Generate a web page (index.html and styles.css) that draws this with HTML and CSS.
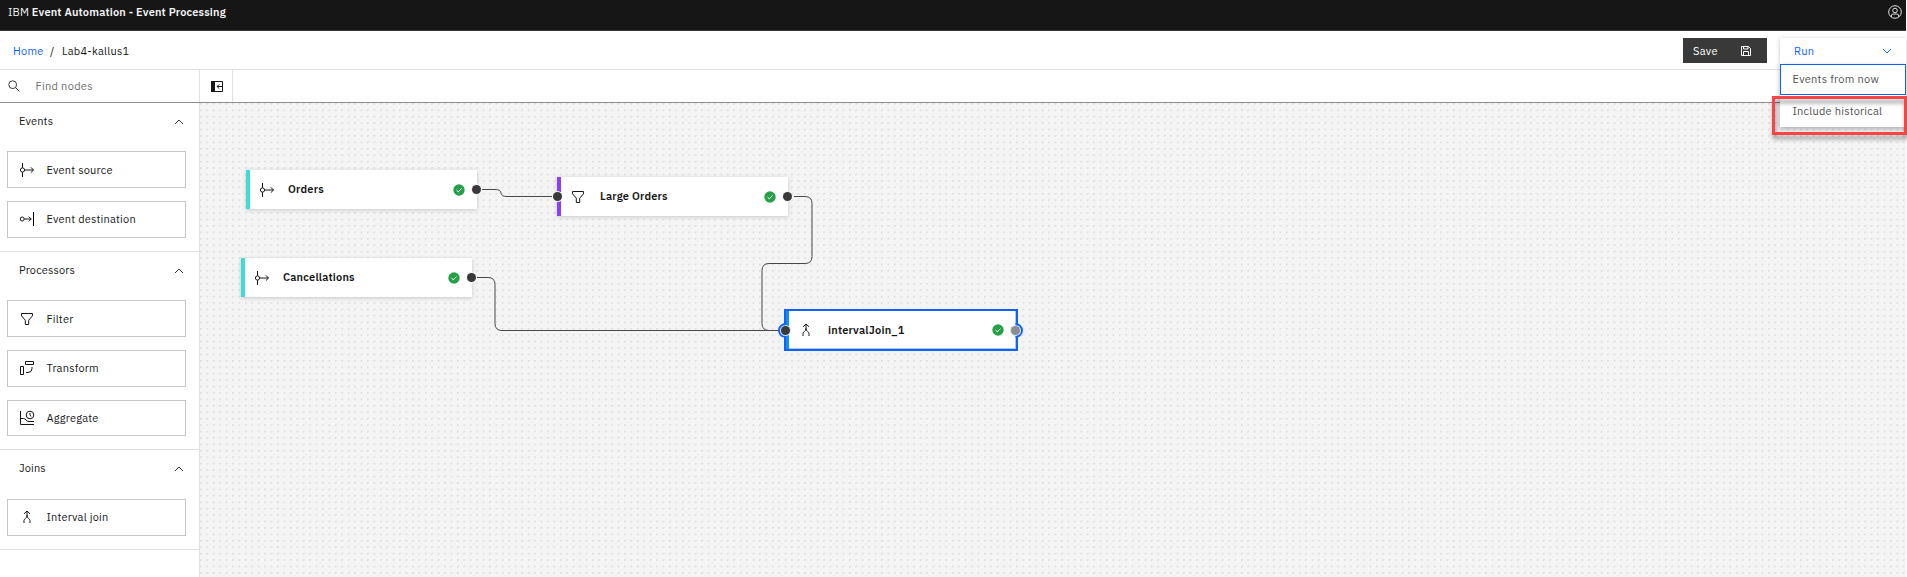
FILE: index.html
```html
<!DOCTYPE html>
<html lang="en">
<head>
<meta charset="utf-8">
<title>Event Processing</title>
<link rel="stylesheet" href="styles.css">
</head>
<body>
<svg class="defs" aria-hidden="true">
  <symbol id="source" viewBox="0 0 16 16"><path d="M3.500 1v4.800M3.500 10.200V15M5.700 8h8.800M11.800 5.300 14.500 8l-2.700 2.700"/><circle cx="3.500" cy="8" r="2.100"/></symbol>
  <symbol id="destination" viewBox="0 0 16 16"><path d="M5.400 8h6.800M9.800 5.600 12.200 8l-2.400 2.400"/><circle cx="3.200" cy="8" r="2"/><path class="heavy" d="M14.500 1v14"/></symbol>
  <symbol id="filter" viewBox="0 0 16 16"><path d="M2.500 2.500h11v2.300L9.700 9.200v4.300H6.300V9.200L2.500 4.800z"/></symbol>
  <symbol id="transform" viewBox="0 0 16 16"><path d="M6.500 1.500h8v3h-8zM1.500 6.500h3v8h-3zM13 7v1.500a4 4 0 0 1-4 4H7"/></symbol>
  <symbol id="aggregate" viewBox="0 0 16 16"><path d="M1.500 1v13.500H15M1.500 8.500h3c2.500 0 2.500 3 5.500 3H15"/><circle cx="11" cy="5" r="3.800"/><path d="M11 3v2.300l1.300 1"/></symbol>
  <symbol id="join" viewBox="0 0 16 16"><path d="M8 2v5M5 4.800 8 2l3 2.800M8 6.500c0 3-3 3-3 5V14M8 6.500c0 3 3 3 3 5V14"/></symbol>
  <symbol id="chevron" viewBox="0 0 10 6"><path d="m1 5 4-4 4 4"/></symbol>
  <symbol id="check" viewBox="0 0 12 12"><circle cx="6" cy="6" r="5.700" fill="#24a148" stroke="none"/><path stroke="#fff" d="m3.500 6.100 1.800 1.700 3.200-3.300"/></symbol>
</svg>

<header class="header">
  <div class="brand">IBM <b>Event Automation - Event Processing</b></div>
  <svg class="user" viewBox="0 0 14 14"><circle cx="7" cy="7" r="6.300"/><circle cx="7" cy="5.500" r="2.300"/><path d="M3.300 12V11a2 2 0 0 1 2-2h3.400a2 2 0 0 1 2 2v1"/></svg>
</header>

<div class="toolbar">
  <nav class="crumbs"><a class="home">Home</a><span class="slash">/</span><span>Lab4-kallus1</span></nav>
  <div class="actions">
    <button class="save"><span>Save</span><svg class="disk" viewBox="0 0 12 12"><path d="M1.500 1.500h7l2 2v7h-9zM3.500 1.500v2.500h4.500V1.500M3.500 10.500v-4h5v4"/></svg></button>
    <div class="run"><span>Run</span><svg class="down" viewBox="0 0 10 6"><path d="m1 1 4 4 4-4"/></svg>
      <div class="menu">
        <div class="option focused">Events from now</div>
        <div class="option historical">Include historical</div>
      </div>
      <div class="highlight"></div>
    </div>
  </div>
</div>

<div class="subbar">
  <div class="search"><svg class="glass" viewBox="0 0 12 12"><circle cx="4.700" cy="4.700" r="3.900"/><path d="m7.600 7.600 3.800 3.800"/></svg><span>Find nodes</span></div>
  <div class="toggle"><svg class="panel" viewBox="0 0 12 11"><path d="M.5.5h11v10H.500z"/><path class="solid" d="M0 0h4v11H0z"/><path d="M11.500 5.500H6.300M8.300 3.300 6.100 5.500l2.200 2.200"/></svg></div>
</div>

<main class="main">
  <aside class="sidebar">
    <section class="group">
      <h2 class="group-head"><span>Events</span><svg class="caret"><use href="#chevron"/></svg></h2>
      <div class="item"><svg class="icon"><use href="#source"/></svg><span>Event source</span></div>
      <div class="item"><svg class="icon"><use href="#destination"/></svg><span>Event destination</span></div>
    </section>
    <section class="group">
      <h2 class="group-head"><span>Processors</span><svg class="caret"><use href="#chevron"/></svg></h2>
      <div class="item"><svg class="icon"><use href="#filter"/></svg><span>Filter</span></div>
      <div class="item"><svg class="icon"><use href="#transform"/></svg><span>Transform</span></div>
      <div class="item short"><svg class="icon"><use href="#aggregate"/></svg><span>Aggregate</span></div>
    </section>
    <section class="group joins">
      <h2 class="group-head"><span>Joins</span><svg class="caret"><use href="#chevron"/></svg></h2>
      <div class="item"><svg class="icon"><use href="#join"/></svg><span>Interval join</span></div>
    </section>
  </aside>

  <div class="canvas">
    <svg class="dots"><defs><pattern id="grid" width="6.426" height="6.426" patternUnits="userSpaceOnUse" x="0" y="0"><path d="M.2.2h1.900L.2 2.100z"/></pattern></defs><rect width="100%" height="100%" fill="url(#grid)"/></svg>
    <svg class="wires" viewBox="200 103 1706 474">
      <path d="M482 189.500h13q6 0 6 3.500t6 3.500h46"/>
      <path d="M794 196.500h11q7 0 7 7v53q0 7-7 7h-36q-7 0-7 7v53q0 7 7 7h14"/>
      <path d="M477 277.500h11q7 0 7 7v39q0 7 7 7h284"/>
    </svg>
    <div class="node orders"><svg class="icon"><use href="#source"/></svg><span class="label">Orders</span><svg class="ok"><use href="#check"/></svg><i class="port out"></i></div>
    <div class="node large"><i class="port in"></i><svg class="icon"><use href="#filter"/></svg><span class="label">Large Orders</span><svg class="ok"><use href="#check"/></svg><i class="port out"></i></div>
    <div class="node cancel"><svg class="icon"><use href="#source"/></svg><span class="label">Cancellations</span><svg class="ok"><use href="#check"/></svg><i class="port out"></i></div>
    <div class="node join"><i class="port in"></i><svg class="icon"><use href="#join"/></svg><span class="label">intervalJoin_1</span><svg class="ok"><use href="#check"/></svg><i class="port out"></i></div>
  </div>
</main>
</body>
</html>
```
FILE: styles.css
```css
* { box-sizing: border-box; }
body { margin: 0; width: 1907px; height: 577px; padding-right: 1px; overflow: hidden; display: flex; flex-direction: column; background: #fff; color: #161616; font: 11px/16px "IBM Plex Sans", Roboto, "Liberation Sans", sans-serif; white-space: nowrap; }
svg { display: block; fill: none; stroke: currentColor; flex: none; }
.defs { position: absolute; width: 0; height: 0; }
.header { height: 31px; flex: none; display: flex; justify-content: space-between; background: #161616; border-bottom: 1px solid #393939; color: #f4f4f4; padding: 4px 4px 0 8px; }
.brand { letter-spacing: .17px; }
.brand b { font-weight: 600; }
.user { width: 14px; height: 14px; margin-top: 1px; color: #e0e0e0; }
.toolbar { height: 39px; flex: none; display: flex; justify-content: space-between; align-items: flex-start; border-bottom: 1px solid #e0e0e0; padding-top: 7px; }
.crumbs { display: flex; padding: 5px 0 0 13px; letter-spacing: .24px; }
.home { color: #0f62fe; width: 37px; }
.slash { width: 12px; }
.actions { display: flex; gap: 13px; }
.save { width: 84px; height: 25px; display: flex; align-items: center; justify-content: space-between; padding: 0 15px 0 10px; border: 0; background: #393939; color: #fff; font: inherit; letter-spacing: .3px; }
.disk { width: 12px; height: 12px; }
.run { position: relative; z-index: 2; width: 126px; height: 26px; display: flex; align-items: center; justify-content: space-between; padding: 0 14px 0 14px; background: #fff; color: #0f62fe; box-shadow: 0 1px 4px rgba(0,0,0,.25); letter-spacing: .2px; }
.down { width: 10px; height: 6px; }
.menu { position: absolute; left: 0; top: 26px; width: 126px; height: 63px; background: #fff; box-shadow: 0 2px 5px rgba(0,0,0,.3); color: #525252; }
.option { height: 31px; display: flex; align-items: center; padding: 0 11.500px 1px; border: 1px solid transparent; letter-spacing: .27px; }
.focused { border-color: #0f62fe; }
.historical { padding-bottom: 0; letter-spacing: .22px; }
.highlight { position: absolute; left: -8px; top: 58px; width: 135px; height: 39px; border: 3px solid #fa4444; filter: drop-shadow(1px 4px 2px rgba(0,0,0,.4)); }
.subbar { height: 33px; flex: none; display: flex; border-bottom: 1px solid #8d8d8d; }
.search { width: 200px; display: flex; align-items: center; gap: 15.500px; padding-left: 8px; border-right: 1px solid #e0e0e0; color: #6f6f6f; letter-spacing: .3px; }
.glass { width: 12px; height: 12px; color: #393939; }
.toggle { width: 33px; display: flex; align-items: center; padding-left: 10.500px; border-right: 1px solid #e0e0e0; }
.panel { width: 12px; height: 11px; }
.solid { fill: currentColor; stroke: none; }
.heavy { stroke: #000; }
.main { flex: 1; min-height: 0; display: flex; }
.sidebar { width: 200px; flex: none; border-right: 1px solid #e0e0e0; }
.group { border-bottom: 1px solid #e0e0e0; padding: 0 13px 13px 7px; }
.group-head { height: 48px; margin: 0; display: flex; align-items: flex-start; justify-content: space-between; padding: 10px 2px 0 12px; font: inherit; letter-spacing: .15px; }
.joins .group-head { height: 49px; }
.caret { width: 10px; height: 6px; margin-top: 6px; color: #393939; }
.item { height: 37px; display: flex; align-items: center; gap: 11.400px; padding-left: 11px; border: 1px solid #c6c6c6; letter-spacing: .21px; }
.item + .item { margin-top: 13px; padding-bottom: 1px; }
.item.short { height: 36px; padding-bottom: 0; }
.joins .item { padding-bottom: 1px; }
.icon { width: 16px; height: 16px; }
.canvas { position: relative; flex: 1; background: #f4f4f4; overflow: hidden; }
.dots, .wires { position: absolute; inset: 0; width: 1706px; height: 474px; }
.dots { stroke: none; }
.dots path { fill: #cfcfcf; }
.wires { color: #484848; }
.node { position: absolute; width: 231px; height: 39px; display: flex; align-items: center; padding: 0 12px 0 9px; border-left: 4px solid #3ddbd9; background: #fff; box-shadow: 0 1px 4px rgba(0,0,0,.18); font-weight: 600; }
.label { flex: 1; margin-left: 13px; padding-bottom: 2px; letter-spacing: .2px; }
.ok { width: 12px; height: 12px; }
.orders { left: 46px; top: 67px; }
.large { left: 357px; top: 74px; border-color: #8a3ffc; }
.large .label { margin-left: 14px; }
.cancel { left: 41px; top: 155px; }
.join { left: 584px; top: 206px; width: 234px; height: 42px; border: 2px solid #0f62fe; padding: 0 12px 0 12px; box-shadow: inset 3px 0 #1192e8, inset -1px -1px #a6c8ff; }
.join .label { padding-bottom: 1px; margin-left: 14px; }
.port { position: absolute; top: 50%; width: 9px; height: 9px; margin-top: -4.500px; border-radius: 50%; background: #393939; box-shadow: 0 0 0 1px #f4f4f4; }
.out { right: -4px; }
.in { left: -8px; }
.join .port { box-shadow: 0 0 0 1px #d0e2ff; }
.join .port::before { content: ""; position: absolute; inset: -3px; border: 2px solid #0f62fe; border-radius: 50%; }
.join .in { left: -5px; }
.join .in::before { clip-path: inset(0 50% 0 0); }
.join .out { background: #8d8d8d; }
.join .out::before { clip-path: inset(0 0 0 50%); }
```
